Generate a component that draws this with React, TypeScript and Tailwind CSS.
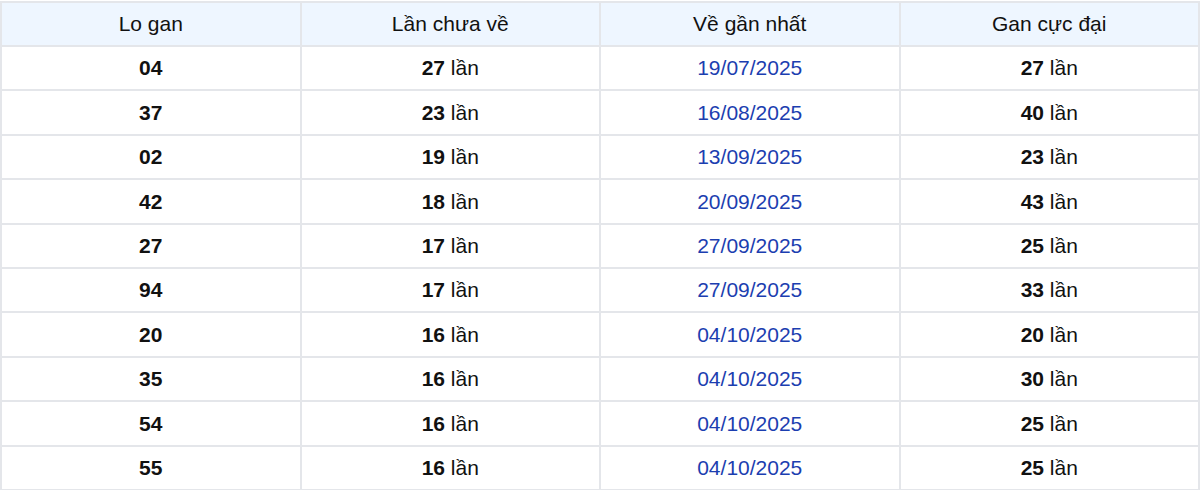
const rows = [
  { so: "04", chua: 27, ngay: "19/07/2025", max: 27 },
  { so: "37", chua: 23, ngay: "16/08/2025", max: 40 },
  { so: "02", chua: 19, ngay: "13/09/2025", max: 23 },
  { so: "42", chua: 18, ngay: "20/09/2025", max: 43 },
  { so: "27", chua: 17, ngay: "27/09/2025", max: 25 },
  { so: "94", chua: 17, ngay: "27/09/2025", max: 33 },
  { so: "20", chua: 16, ngay: "04/10/2025", max: 20 },
  { so: "35", chua: 16, ngay: "04/10/2025", max: 30 },
  { so: "54", chua: 16, ngay: "04/10/2025", max: 25 },
  { so: "55", chua: 16, ngay: "04/10/2025", max: 25 },
];

export default function App() {
  return (
    <div className="bg-white pt-px font-['Liberation_Sans',Arial,sans-serif] text-[21px] text-[#111]">
      <table className="w-full table-fixed border-collapse text-center">
        <thead>
          <tr className="h-[44px] bg-[#eef6ff]">
            <th className="border-2 border-[#e4e6ea] font-normal">Lo gan</th>
            <th className="border-2 border-[#e4e6ea] font-normal">Lần chưa về</th>
            <th className="border-2 border-[#e4e6ea] font-normal">Về gần nhất</th>
            <th className="border-2 border-[#e4e6ea] font-normal">Gan cực đại</th>
          </tr>
        </thead>
        <tbody>
          {rows.map((r) => (
            <tr key={r.so} className="h-[44.4px]">
              <td className="border-2 border-[#e4e6ea] font-bold">{r.so}</td>
              <td className="border-2 border-[#e4e6ea]">
                <b>{r.chua}</b> lần
              </td>
              <td className="border-2 border-[#e4e6ea] text-[#1c3eb0]">{r.ngay}</td>
              <td className="border-2 border-[#e4e6ea]">
                <b>{r.max}</b> lần
              </td>
            </tr>
          ))}
        </tbody>
      </table>
    </div>
  );
}
